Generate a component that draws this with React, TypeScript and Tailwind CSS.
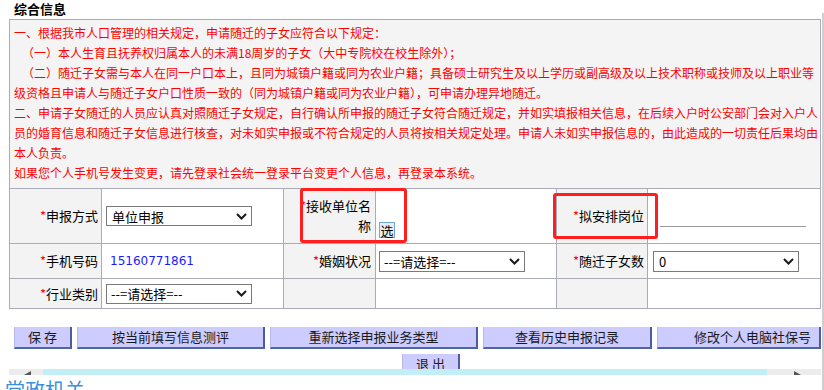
import React from "react";

const FONT = { fontFamily: '"Noto Sans CJK SC", "Noto Sans", sans-serif' };

function Star() {
  return <span className="text-[#ff0000]">*</span>;
}

function Chevron() {
  return (
    <svg width="11" height="7" viewBox="0 0 11 7" className="shrink-0">
      <path d="M1 1 L5.5 5.5 L10 1" fill="none" stroke="#1a1a1a" strokeWidth="2" />
    </svg>
  );
}

function FakeSelect({ value, className }: { value: string; className: string }) {
  return (
    <div className={"flex items-center justify-between border border-[#7a7a7a] bg-white pr-[4px] text-[13px] text-black " + className}>
      <span className="leading-none">{value}</span>
      <Chevron />
    </div>
  );
}

function Label({ children, className }: { children: React.ReactNode; className?: string }) {
  return (
    <div className={"flex items-center justify-end border-l border-b border-[#a9abb8] bg-[#f3f3f3] pr-[3px] text-[13px] text-black " + (className || "")}>
      <span>
        <Star />
        {children}
      </span>
    </div>
  );
}

function Cell({ children, className }: { children?: React.ReactNode; className?: string }) {
  return <div className={"flex border-l border-b border-[#a9abb8] bg-white " + (className || "")}>{children}</div>;
}

function Btn({ children, className }: { children: React.ReactNode; className: string }) {
  return (
    <div className={"flex h-[22px] shrink-0 items-center bg-[#ccccff] border-l border-l-[#b8b8ec] border-r-2 border-r-[#4e5c9e] border-b-2 border-b-[#4e66a3] text-[13px] text-[#1a1a1a] " + className}>
      {children}
    </div>
  );
}

export default function App() {
  return (
    <div className="relative flex h-[390px] w-[824px] overflow-hidden bg-white" style={FONT}>
      <div className="w-[822px] shrink-0">
        {/* title */}
        <div className="h-[19px] pl-[14px] text-[13px] font-bold leading-[17px] text-black">综合信息</div>

        {/* info box */}
        <div className="ml-[9px] w-[812px] border border-[#a9abb8] bg-[#f4f4f4] pl-[4px] pt-[3px] pb-[5px] text-[12px] leading-[20px] text-[#ff0000]">
          <div className="whitespace-nowrap">一、根据我市人口管理的相关规定，申请随迁的子女应符合以下规定：</div>
          <div className="whitespace-nowrap pl-[8px]">（一）本人生育且抚养权归属本人的未满18周岁的子女（大中专院校在校生除外）；</div>
          <div className="whitespace-nowrap pl-[8px]">（二）随迁子女需与本人在同一户口本上，且同为城镇户籍或同为农业户籍；具备硕士研究生及以上学历或副高级及以上技术职称或技师及以上职业等</div>
          <div className="whitespace-nowrap">级资格且申请人与随迁子女户口性质一致的（同为城镇户籍或同为农业户籍），可申请办理异地随迁。</div>
          <div className="whitespace-nowrap">二、申请子女随迁的人员应认真对照随迁子女规定，自行确认所申报的随迁子女符合随迁规定，并如实填报相关信息，在后续入户时公安部门会对入户人</div>
          <div className="whitespace-nowrap">员的婚育信息和随迁子女信息进行核查，对未如实申报或不符合规定的人员将按相关规定处理。申请人未如实申报信息的，由此造成的一切责任后果均由</div>
          <div className="whitespace-nowrap">本人负责。</div>
          <div className="whitespace-nowrap">如果您个人手机号发生变更，请先登录社会统一登录平台变更个人信息，再登录本系统。</div>
        </div>

        {/* form table */}
        <div className="ml-[9px] grid w-[812px] grid-cols-[92px_182px_92px_181px_91px_173px] border-r border-[#a9abb8]">
          {/* row 1 */}
          <Label className="h-[55px]">申报方式</Label>
          <Cell className="items-center pl-[4px]">
            <FakeSelect value="单位申报" className="h-[20px] w-[146px] pl-[5px]" />
          </Cell>
          <div className="flex h-[55px] items-center justify-end border-l border-b border-[#a9abb8] bg-[#f3f3f3] pr-[4px] text-right text-[13px] leading-[20px] text-black">
            <span>
              <Star />
              接收单位名
              <br />
              称
            </span>
          </div>
          <Cell className="items-end pl-[3px] pb-[5px]">
            <div className="flex h-[16px] w-[16px] items-center justify-center border border-[#6fa6d6] bg-[#e8eef4] text-[13px] leading-none text-black">选</div>
          </Cell>
          <Label className="h-[55px]">拟安排岗位</Label>
          <Cell className="items-start pl-[12px] pt-[18px]">
            <div className="h-[20px] w-[146px] border-b border-[#9a9a9a]" />
          </Cell>

          {/* row 2 */}
          <Label className="h-[35px]">手机号码</Label>
          <Cell className="items-center pl-[8px]">
            <span className="text-[12px] text-[#1a1aff]" style={{ fontFamily: '"DejaVu Sans", sans-serif' }}>15160771861</span>
          </Cell>
          <Label className="h-[35px] pr-[4px]">婚姻状况</Label>
          <Cell className="items-center pl-[3px]">
            <FakeSelect value="--=请选择=--" className="h-[21px] w-[146px] pl-[4px]" />
          </Cell>
          <Label className="h-[35px]">随迁子女数</Label>
          <Cell className="items-center pl-[5px]">
            <FakeSelect value="0" className="h-[21px] w-[146px] pl-[5px]" />
          </Cell>

          {/* row 3 */}
          <Label className="h-[30px]">行业类别</Label>
          <Cell className="items-center pl-[4px]">
            <FakeSelect value="--=请选择=--" className="h-[20px] w-[146px] pl-[4px]" />
          </Cell>
          <div className="h-[30px] border-l border-b border-[#a9abb8] bg-[#f3f3f3]" />
          <Cell />
          <div className="h-[30px] border-l border-b border-[#a9abb8] bg-[#f3f3f3]" />
          <Cell />
        </div>

        {/* buttons */}
        <div className="mt-[18px] ml-[14px] flex gap-[5px]">
          <Btn className="w-[58px] justify-center">保 存</Btn>
          <Btn className="w-[188px] justify-center">按当前填写信息测评</Btn>
          <Btn className="w-[208px] justify-center">重新选择申报业务类型</Btn>
          <Btn className="w-[169px] justify-center">查看历史申报记录</Btn>
          <Btn className="w-[164px] pl-[36px]">修改个人电脑社保号</Btn>
        </div>
        <div className="mt-[5px] ml-[402px] h-[15px] overflow-hidden">
          <Btn className="w-[58px] justify-center">退 出</Btn>
        </div>

        {/* scrollbar strip */}
        <div className="ml-[9px] flex h-[6px] w-[812px]">
          <div className="flex w-[34px] items-end justify-center bg-[#ececec] pl-[4px]">
            <svg width="8" height="4" viewBox="0 0 8 4"><path d="M0 4 L7 4 L7 0 Z" fill="#555" /></svg>
          </div>
          <div className="flex-1 bg-[#c2eff6]" />
          <div className="flex w-[54px] items-end justify-center bg-[#ececec] pl-[8px]">
            <svg width="8" height="4" viewBox="0 0 8 4"><path d="M0 0 L7 4 L0 4 Z" fill="#555" /></svg>
          </div>
        </div>

        <div className="pl-[5px] pt-[1px] text-[20px] leading-[28px] text-[#3d8fdc]">党政机关</div>
      </div>
      <div className="mt-[13px] h-[377px] w-[2px] bg-[#cfcfcf]" />

      {/* annotation overlays */}
      <div className="absolute left-[300px] top-[188px] h-[55px] w-[107px] rounded-[3px] border-[3px] border-[#ff1f1f]" />
      <div className="absolute left-[553px] top-[193px] h-[46px] w-[105px] rounded-[3px] border-[3px] border-[#ff1f1f]" />
    </div>
  );
}
